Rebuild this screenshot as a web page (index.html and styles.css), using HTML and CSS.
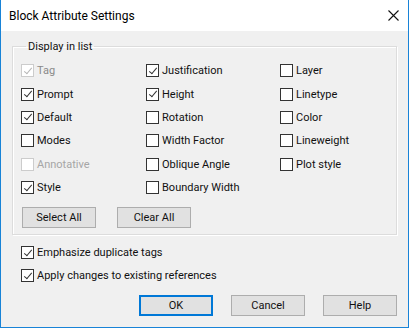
FILE: index.html
```html
<!DOCTYPE html>
<html lang="en">
<head>
    <meta charset="UTF-8">
    <title>Block Attribute Settings</title>
    <link rel="stylesheet" href="styles.css">
</head>
<body>

    <div class="window">
        <div class="titlebar">
            <span class="title">Block Attribute Settings</span>
            <svg class="close" width="11" height="11" viewBox="0 0 11 11">
                <path d="M0.5 0.5 L10.5 10.5 M10.5 0.5 L0.5 10.5" stroke="#111" stroke-width="1.1" fill="none"/>
            </svg>
        </div>

        <div class="body">
            <fieldset class="group">
                <legend>Display in list</legend>
                <div class="options">
                    <label class="opt disabled"><span class="box on"></span>Tag</label>
                    <label class="opt"><span class="box on"></span>Justification</label>
                    <label class="opt"><span class="box"></span>Layer</label>

                    <label class="opt"><span class="box on"></span>Prompt</label>
                    <label class="opt"><span class="box on"></span>Height</label>
                    <label class="opt"><span class="box"></span>Linetype</label>

                    <label class="opt"><span class="box on"></span>Default</label>
                    <label class="opt"><span class="box"></span>Rotation</label>
                    <label class="opt"><span class="box"></span>Color</label>

                    <label class="opt"><span class="box"></span>Modes</label>
                    <label class="opt"><span class="box"></span>Width Factor</label>
                    <label class="opt"><span class="box"></span>Lineweight</label>

                    <label class="opt disabled light"><span class="box"></span>Annotative</label>
                    <label class="opt"><span class="box"></span>Oblique Angle</label>
                    <label class="opt"><span class="box"></span>Plot style</label>

                    <label class="opt"><span class="box on"></span>Style</label>
                    <label class="opt"><span class="box"></span>Boundary Width</label>
                    <span></span>
                </div>
                <div class="group-actions">
                    <button class="btn">Select All</button>
                    <button class="btn">Clear All</button>
                </div>
            </fieldset>

            <div class="extra">
                <label class="opt"><span class="box on"></span>Emphasize duplicate tags</label>
                <label class="opt"><span class="box on"></span>Apply changes to existing references</label>
            </div>

            <div class="actions">
                <button class="btn default">OK</button>
                <button class="btn">Cancel</button>
                <button class="btn">Help</button>
            </div>
        </div>
    </div>

</body>
</html>
```

FILE: styles.css
```css
body {
    margin: 0;
    padding: 0;
    font-family: Roboto, "Liberation Sans", Arial, sans-serif;
    font-size: 11px;
    color: #111;
    background-color: #f0f0f0;
}
.window {
    width: 409px;
    height: 328px;
    box-sizing: border-box;
    border: 1px solid #1883d7;
    border-top: none;
    background-color: #f0f0f0;
    overflow: hidden;
}
.titlebar {
    height: 31px;
    background-color: #fff;
    display: flex;
    align-items: center;
    justify-content: space-between;
    padding: 0 9px 0 8px;
}
.title {
    font-size: 12px;
    color: #000;
}
.close {
    display: block;
}
.body {
    padding: 0 11px;
}
.group {
    margin: 8px 0 0 0;
    padding: 5px 0 6px 8px;
    border: 1px solid #dcdcdc;
    box-shadow: 1px 1px 0 #fff, inset 1px 1px 0 #fff;
    width: 385px;
    box-sizing: border-box;
}
.group legend {
    margin-left: 5px;
    padding: 0 2px;
    line-height: 15px;
}
.options {
    display: grid;
    grid-template-columns: 125px 134px 1fr;
    grid-auto-rows: 23.4px;
}
.opt {
    display: flex;
    align-items: center;
    white-space: nowrap;
}
.box {
    width: 13px;
    height: 13px;
    box-sizing: border-box;
    border: 1px solid #333;
    background-color: #fff;
    margin-right: 3px;
    flex: none;
    position: relative;
}
.box.on::after {
    content: "";
    position: absolute;
    left: 3.5px;
    top: 0.5px;
    width: 3px;
    height: 7px;
    border-right: 1.2px solid #333;
    border-bottom: 1.2px solid #333;
    transform: rotate(40deg);
}
.disabled {
    color: #8a8a8a;
}
.disabled.light {
    color: #a6a6a6;
}
.disabled .box {
    border-color: #cccccc;
}
.disabled .box.on::after {
    border-color: #b5b5b5;
}
.group-actions {
    display: flex;
    gap: 21px;
    margin: 8px 0 0 1px;
}
.btn {
    width: 74px;
    height: 21px;
    box-sizing: border-box;
    background-color: #e1e1e1;
    border: 1px solid #adadad;
    font-family: Roboto, "Liberation Sans", Arial, sans-serif;
    font-size: 11px;
    color: #111;
    padding: 0;
}
.btn.default {
    border-color: #0078d7;
    box-shadow: inset 0 0 0 1px #0078d7;
}
.extra {
    margin: 6px 0 0 9px;
    display: grid;
    grid-auto-rows: 23px;
}
.actions {
    display: flex;
    justify-content: flex-end;
    gap: 18px;
    margin-top: 8px;
}
```
